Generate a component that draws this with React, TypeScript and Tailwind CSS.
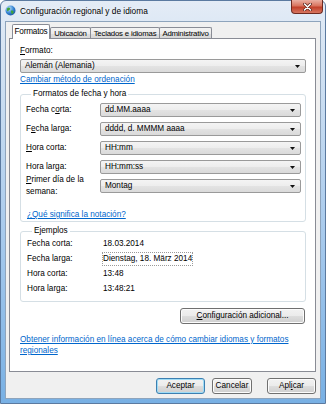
import React from "react";

const font = "font-['Liberation_Sans',Arial,sans-serif]";
const link = "text-[#0066cc] underline";

function Arrow() {
  return (
    <svg width="5" height="3" viewBox="0 0 5 3">
      <path d="M0 0h5L2.5 3z" fill="#111" />
    </svg>
  );
}

function Combo({ value, className = "" }: { value: string; className?: string }) {
  return (
    <div
      className={`flex h-[14px] items-center justify-between rounded-[2px] border border-[#9a9a9a] bg-[linear-gradient(to_bottom,#f4f4f4_0%,#ededed_50%,#e3e3e3_51%,#dadada_100%)] pl-[4px] pr-[5px] ${className}`}
    >
      <span className="leading-[12px]">{value}</span>
      <Arrow />
    </div>
  );
}

function Globe() {
  return (
    <svg width="11" height="11" viewBox="0 0 11 11">
      <defs>
        <radialGradient id="g" cx="0.35" cy="0.3" r="0.8">
          <stop offset="0" stopColor="#bfe3ff" />
          <stop offset="0.6" stopColor="#2f7fd0" />
          <stop offset="1" stopColor="#1b4f98" />
        </radialGradient>
      </defs>
      <circle cx="5.5" cy="5.5" r="5" fill="url(#g)" />
      <path d="M2.2 3.2c1-.9 2.4-.8 3 .2.3.7-.4 1.3-1.1 1.5-.6.2-.5 1.2-1.2 1.3C2 6.3 1.6 4.1 2.2 3.2z" fill="#3fa337" />
      <path d="M6.3 5.6c.9-.3 2 .2 2.3 1.1.2.9-.6 2-1.5 2.2-.7.1-.6-1-1-1.6-.3-.6-.5-1.4.2-1.7z" fill="#3fa337" />
    </svg>
  );
}

function Btn({
  children,
  className = "",
  primary = false,
}: {
  children: React.ReactNode;
  className?: string;
  primary?: boolean;
}) {
  return (
    <div
      className={`flex h-[16px] items-center justify-center whitespace-nowrap rounded-[3px] border bg-[linear-gradient(to_bottom,#f2f2f2_0%,#ebebeb_50%,#dddddd_51%,#cfcfcf_100%)] leading-[12px] ${
        primary
          ? "border-[#3c7fb1] shadow-[inset_0_0_0_1px_#9fdcf6]"
          : "border-[#707070] shadow-[inset_0_0_0_1px_#fcfcfc]"
      } ${className}`}
    >
      {children}
    </div>
  );
}

const tabs = [
  { label: "Ubicación", w: "w-[41px]" },
  { label: "Teclados e idiomas", w: "w-[70px]" },
  { label: "Administrativo", w: "w-[53px]" },
];

const examples = [
  ["Fecha corta:", "18.03.2014"],
  ["Fecha larga:", "Dienstag, 18. März 2014"],
  ["Hora corta:", "13:48"],
  ["Hora larga:", "13:48:21"],
];

export default function App() {
  return (
    <div className="h-[404px] w-[326px] overflow-hidden bg-white">
      <div
        className={`flex h-[404px] w-[326px] flex-col rounded-t-[6px] border border-[#5b7aa0] bg-[linear-gradient(to_bottom,#e4ecf6_0%,#d6e4f3_12%,#a6c9ec_60%,#78b0e4_100%)] ${font} text-[8.2px] leading-[12px] text-black`}
      >
        {/* title bar */}
        <div className="flex h-[20px] shrink-0 items-start">
          <div className="ml-[4px] mt-[4px]">
            <Globe />
          </div>
          <div className="ml-[4px] mt-[4px] text-[8.3px] [text-shadow:0_0_5px_#fff]">
            Configuración regional y de idioma
          </div>
          <div className="-mt-[1px] ml-auto mr-[2px] flex h-[14px] w-[32px] items-center justify-center rounded-b-[4px] border border-t-0 border-[#6e2a20] bg-[linear-gradient(to_bottom,#eab0a3_0%,#d9735e_45%,#c2402a_55%,#d77660_100%)]">
            <svg width="9" height="8" viewBox="0 0 9 8">
              <path d="M1.5 1l6 6M7.5 1l-6 6" stroke="#5a2118" strokeWidth="3" strokeLinecap="round" />
              <path d="M1.5 1l6 6M7.5 1l-6 6" stroke="#fff" strokeWidth="1.6" strokeLinecap="round" />
            </svg>
          </div>
        </div>

        {/* client area */}
        <div className="mx-[4px] mb-[4px] flex flex-1 flex-col border border-[#8ea4bc] bg-[#f0f0f0] pl-[3px] pr-[4px] pt-[2px]">
          {/* tabs */}
          <div className="flex h-[15px] items-end pl-[3px]">
            <div className="relative z-10 h-[15px] w-[38px] whitespace-nowrap rounded-t-[2px] border border-b-0 border-[#898c95] bg-white text-center leading-[13px] tracking-[-0.2px]">
              Formatos
            </div>
            {tabs.map((t, i) => (
              <div
                key={t.label}
                className={`h-[12px] ${t.w} ${i > 0 ? "-ml-[1px]" : ""} overflow-hidden whitespace-nowrap rounded-t-[2px] border border-b-0 border-[#898c95] bg-[linear-gradient(to_bottom,#f3f3f3_0%,#ebebeb_50%,#dedede_51%,#d6d6d6_100%)] text-center text-[7.8px] leading-[11px] tracking-[-0.2px]`}
              >
                {t.label}
              </div>
            ))}
          </div>

          {/* panel */}
          <div className="-mt-[1px] flex h-[334px] flex-col border border-[#898c95] bg-white pl-[10px] pr-[9px] pt-[6px]">
            <div className="h-[12px]">
              <u>F</u>ormato:
            </div>
            <Combo className="mt-[2px]" value="Alemán (Alemania)" />
            <div className="mt-[1px]">
              <span className={link}>Cambiar método de ordenación</span>
            </div>

            <fieldset className="mt-[2px] rounded-[3px] border border-[#d5dfe5] pb-[0px] pl-[5px] pr-[4px]">
              <legend className="ml-[5px] px-[2px]">Formatos de fecha y hora</legend>
              <div className="mt-[3px] flex items-center">
                <div className="w-[74px]">
                  Fecha c<u>o</u>rta:
                </div>
                <Combo className="flex-1" value="dd.MM.aaaa" />
              </div>
              <div className="mt-[5px] flex items-center">
                <div className="w-[74px]">
                  F<u>e</u>cha larga:
                </div>
                <Combo className="flex-1" value="dddd, d. MMMM aaaa" />
              </div>
              <div className="mt-[5px] flex items-center">
                <div className="w-[74px]">
                  <u>H</u>ora corta:
                </div>
                <Combo className="flex-1" value="HH:mm" />
              </div>
              <div className="mt-[5px] flex items-center">
                <div className="w-[74px]">Hora larga:</div>
                <Combo className="flex-1" value="HH:mm:ss" />
              </div>
              <div className="flex items-center">
                <div className="w-[74px]">
                  <u>P</u>rimer día de la
                  <br />
                  semana:
                </div>
                <Combo className="flex-1" value="Montag" />
              </div>
              <div className="mt-[11px] pl-[1px]">
                <span className={link}>¿Qué significa la notación?</span>
              </div>
            </fieldset>

            <fieldset className="mt-[3px] rounded-[3px] border border-[#d5dfe5] pb-[6px] pl-[6px] pr-[4px]">
              <legend className="ml-[5px] px-[2px]">Ejemplos</legend>
              <div className="mt-[1px] flex flex-col gap-[3px]">
                {examples.map(([k, v], i) => (
                  <div key={k} className="flex h-[12px] items-center">
                    <div className="w-[76px]">{k}</div>
                    <div className={i === 1 ? "outline-1 outline-dotted outline-[#9a9a9a]" : ""}>{v}</div>
                  </div>
                ))}
              </div>
            </fieldset>

            <Btn className="mr-[1px] mt-[6px] w-[125px] self-end">
              <span>
                <u>C</u>onfiguración adicional...
              </span>
            </Btn>

            <div className="mt-[10px] leading-[11px]">
              <span className={link}>
                Obtener información en línea acerca de cómo cambiar idiomas y formatos regionales
              </span>
            </div>
          </div>

          {/* dialog buttons */}
          <div className="mt-[6px] flex justify-end">
            <Btn primary className="w-[49px]">
              Aceptar
            </Btn>
            <Btn className="ml-[7px] w-[40px]">Cancelar</Btn>
            <Btn className="ml-[15px] w-[49px]">
              <span>
                Apl<u>i</u>car
              </span>
            </Btn>
          </div>
        </div>
      </div>
    </div>
  );
}
